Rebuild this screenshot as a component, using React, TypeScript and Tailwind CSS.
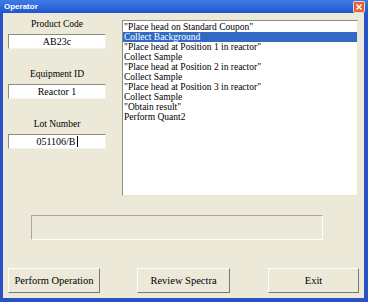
import React from 'react';

const items = [
  '"Place head on Standard Coupon"',
  'Collect Background',
  '"Place head at Position 1 in reactor"',
  'Collect Sample',
  '"Place head at Position 2 in reactor"',
  'Collect Sample',
  '"Place head at Position 3 in reactor"',
  'Collect Sample',
  '"Obtain result"',
  'Perform Quant2',
];

function Field({ label, value, caret, first }: { label: string; value: string; caret?: boolean; first?: boolean }) {
  return (
    <div className={first ? '' : 'mt-[19px]'}>
      <div className="h-[12px] text-center text-[9.5px] leading-[12px] text-black">{label}</div>
      <div className="mt-[4px] flex h-[15px] items-center justify-center border border-t-[#8e8c80] border-l-[#8e8c80] border-r-[#f4f3ee] border-b-[#f4f3ee] bg-white text-[10px] leading-none text-black">
        <span>{value}</span>
        {caret && <span className="ml-[1px] inline-block h-[11px] w-px bg-black" />}
      </div>
    </div>
  );
}

function Button({ label, width }: { label: string; width: string }) {
  return (
    <button
      className={`${width} flex h-[25px] items-center justify-center border border-t-white border-l-white border-r-[#7a786c] border-b-[#7a786c] bg-[#ece9d8] font-['Liberation_Serif','Times_New_Roman',serif] text-[10.5px] text-black`}
    >
      {label}
    </button>
  );
}

export default function App() {
  return (
    <div className="flex h-[302px] w-[368px] flex-col bg-[#2a52c8] font-['Liberation_Serif','Times_New_Roman',serif]">
      {/* title bar */}
      <div className="flex h-[13px] items-center justify-between bg-gradient-to-b from-[#3f7ce6] to-[#1f55cf] pl-[4px] pr-[3px]">
        <span className="font-['Liberation_Sans',Arial,sans-serif] text-[8px] font-bold leading-none text-white">
          Operator
        </span>
        <div className="flex h-[12px] w-[12px] items-center justify-center rounded-[2px] border border-white/70 bg-[#e0623a]">
          <svg width="8" height="8" viewBox="0 0 8 8">
            <path d="M1.5 1.5 L6.5 6.5 M6.5 1.5 L1.5 6.5" stroke="white" strokeWidth="1.5" />
          </svg>
        </div>
      </div>

      {/* body */}
      <div className="mb-[4px] ml-[3px] mr-[4px] flex flex-1 flex-col bg-[#ece9d8]">
        <div className="flex pt-[5px]">
          <div className="ml-[5px] w-[98px]">
            <Field label="Product Code" value="AB23c" first />
            <Field label="Equipment ID" value="Reactor 1" />
            <Field label="Lot Number" value="051106/B" caret />
          </div>
          <div className="ml-[16px] mt-[2px] h-[176px] w-[236px] border border-t-[#8e8c80] border-l-[#8e8c80] border-r-[#e8e6dc] border-b-[#e8e6dc] bg-white pt-px">
            {items.map((t, i) => (
              <div
                key={i}
                className={`h-[10px] px-[1px] text-[9.5px] leading-[10px] whitespace-nowrap ${
                  i === 1 ? 'bg-[#316ac5] text-white' : 'text-black'
                }`}
              >
                {t}
              </div>
            ))}
          </div>
        </div>

        <div className="ml-[28px] mt-[19px] h-[25px] w-[292px] border border-t-[#aca899] border-l-[#aca899] border-r-white border-b-white" />

        <div className="mt-[28px] flex pl-[5px]">
          <Button label="Perform Operation" width="w-[92px]" />
          <div className="ml-[37px]">
            <Button label="Review Spectra" width="w-[93px]" />
          </div>
          <div className="ml-[38px]">
            <Button label="Exit" width="w-[91px]" />
          </div>
        </div>
      </div>
    </div>
  );
}
